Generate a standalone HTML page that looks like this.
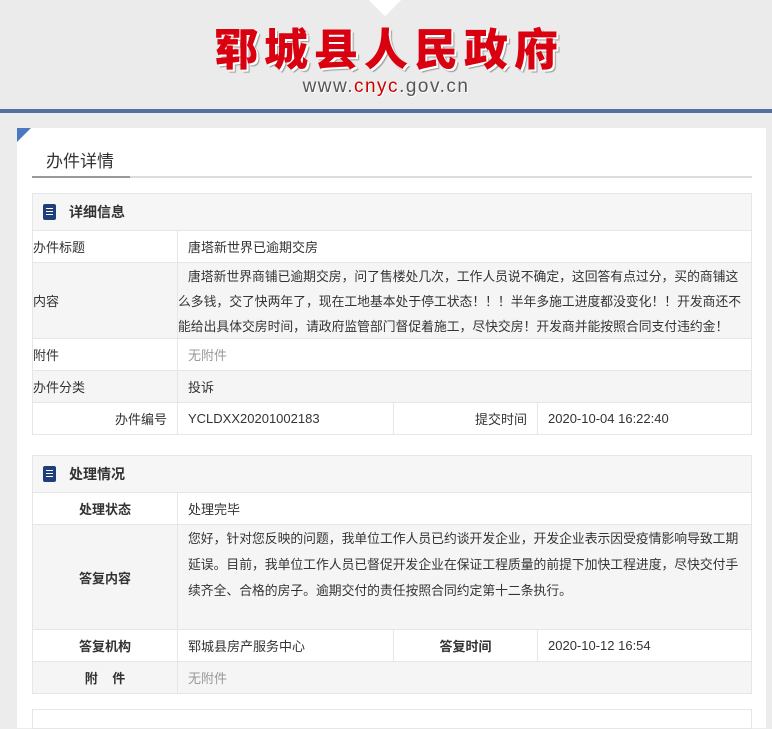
<!DOCTYPE html>
<html><head><meta charset="utf-8"><style>
*{margin:0;padding:0;box-sizing:border-box}
body{width:772px;height:715px;overflow:hidden;background:#ececec;font-family:"Liberation Sans","Noto Sans CJK SC",sans-serif;font-size:13px;color:#333;position:relative}
.hdr{position:absolute;left:0;top:0;width:772px;height:110px;background:#ebebeb}
.notch{position:absolute;top:-20px;width:30px;height:30px;background:#fff;transform:rotate(45deg);left:385px;margin-left:-15px}
.title{position:absolute;left:0;width:772px;top:16px;text-align:center;font-size:44px;line-height:60px;font-weight:900;color:#d9000f;letter-spacing:6px;text-indent:6px;text-shadow:2px 2px 0 #fff,3px 3px 1px #999;font-family:"Noto Sans CJK SC",sans-serif}
.url{position:absolute;left:0;width:772px;top:75px;text-align:center;font-size:19px;line-height:24px;color:#555;letter-spacing:1.5px;text-shadow:1px 1px 0 #fff}
.url b{color:#c00;font-weight:normal}
.line{position:absolute;left:0;top:109px;width:772px;height:4px;background:#5470a0}
.panel{position:absolute;left:17px;top:128px;width:749px;height:600px;background:#fff}
.tri{position:absolute;left:17px;top:128px;width:0;height:0;border-top:14px solid #4a78c2;border-right:14px solid transparent}
.tab{position:absolute;left:46px;top:147px;font-size:17px;color:#333}
.tabl{position:absolute;left:32px;top:176px;width:720px;height:2px;background:#ddd}
.tabl i{position:absolute;left:0;top:0;width:98px;height:2px;background:#999}
.c{position:absolute;border:1px solid #e6e6e6;display:flex;align-items:center;padding:0 10px}
.g{background:#f5f5f5}.w{background:#fff}
.sh{position:absolute;left:32px;width:720px;background:#f6f6f6;border:1px solid #e6e6e6;font-weight:bold;font-size:14px;display:flex;align-items:center;padding-left:36px}
.ic{position:absolute;left:10px;top:50%;margin-top:-8px;width:13px;height:16px;background:#1e3f7a;border-radius:2px}
.ic:after{content:"";position:absolute;left:3px;top:4px;width:7px;height:8px;background:repeating-linear-gradient(#fff 0 1px,transparent 1px 3px)}
.bl{font-weight:bold;justify-content:center}
.gr{color:#999}
.ml{display:block;white-space:nowrap;overflow:hidden}
</style></head><body>
<div class="hdr"><div class="notch"></div>
<div class="title">郓城县人民政府</div>
<div class="url">www.<b>cnyc</b>.gov.cn</div></div>
<div class="line"></div>
<div class="panel"></div><div class="tri"></div>
<div class="tab">办件详情</div>
<div class="tabl"><i></i></div>

<div class="sh" style="top:193px;height:38px"><span class="ic"></span>详细信息</div>
<div class="c w" style="left:32px;top:230px;width:146px;height:33px;padding-left:0">办件标题</div>
<div class="c w" style="left:177px;top:230px;width:575px;height:33px">唐塔新世界已逾期交房</div>
<div class="c g" style="left:32px;top:262px;width:146px;height:77px;padding-left:0">内容</div>
<div class="c g ml" style="left:177px;top:262px;width:575px;height:77px;padding:1px 0 0 0;line-height:25px;font-size:12.8px;letter-spacing:0"><span style="padding-left:10px"></span>唐塔新世界商铺已逾期交房，问了售楼处几次，工作人员说不确定，这回答有点过分，买的商铺这<br>么多钱，交了快两年了，现在工地基本处于停工状态！！！半年多施工进度都没变化！！开发商还不<br>能给出具体交房时间，请政府监管部门督促着施工，尽快交房！开发商并能按照合同支付违约金！</div>
<div class="c w" style="left:32px;top:338px;width:146px;height:33px;padding-left:0">附件</div>
<div class="c w gr" style="left:177px;top:338px;width:575px;height:33px">无附件</div>
<div class="c g" style="left:32px;top:370px;width:146px;height:33px;padding-left:0">办件分类</div>
<div class="c g" style="left:177px;top:370px;width:575px;height:33px">投诉</div>
<div class="c w" style="left:32px;top:402px;width:146px;height:33px;justify-content:flex-end">办件编号</div>
<div class="c w" style="left:177px;top:402px;width:217px;height:33px">YCLDXX20201002183</div>
<div class="c w" style="left:393px;top:402px;width:145px;height:33px;justify-content:flex-end">提交时间</div>
<div class="c w" style="left:537px;top:402px;width:215px;height:33px">2020-10-04 16:22:40</div>

<div class="sh" style="top:455px;height:38px"><span class="ic"></span>处理情况</div>
<div class="c w bl" style="left:32px;top:492px;width:146px;height:33px">处理状态</div>
<div class="c w" style="left:177px;top:492px;width:575px;height:33px">处理完毕</div>
<div class="c g bl" style="left:32px;top:524px;width:146px;height:106px">答复内容</div>
<div class="c g ml" style="left:177px;top:524px;width:575px;height:106px;line-height:26px;padding:1px 0 0 10px;font-size:12.8px">您好，针对您反映的问题，我单位工作人员已约谈开发企业，开发企业表示因受疫情影响导致工期<br>延误。目前，我单位工作人员已督促开发企业在保证工程质量的前提下加快工程进度，尽快交付手<br>续齐全、合格的房子。逾期交付的责任按照合同约定第十二条执行。</div>
<div class="c w bl" style="left:32px;top:629px;width:146px;height:33px">答复机构</div>
<div class="c w" style="left:177px;top:629px;width:217px;height:33px">郓城县房产服务中心</div>
<div class="c w bl" style="left:393px;top:629px;width:145px;height:33px">答复时间</div>
<div class="c w" style="left:537px;top:629px;width:215px;height:33px">2020-10-12 16:54</div>
<div class="c g bl" style="left:32px;top:661px;width:146px;height:33px">附&nbsp;&nbsp;&nbsp;&nbsp;件</div>
<div class="c g gr" style="left:177px;top:661px;width:575px;height:33px">无附件</div>
<div class="c w" style="left:32px;top:709px;width:720px;height:20px"></div>
</body></html>
